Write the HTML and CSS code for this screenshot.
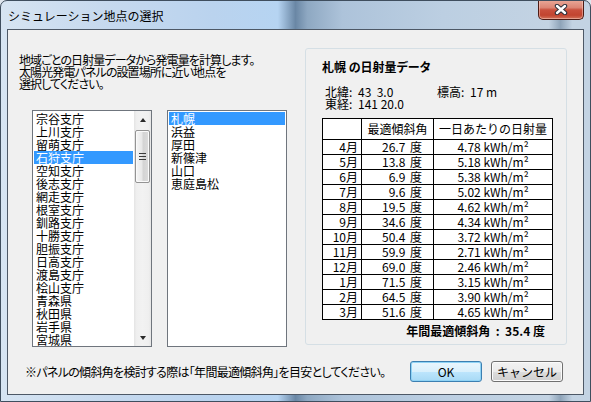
FILE: index.html
```html
<!DOCTYPE html>
<html lang="ja">
<head>
<meta charset="utf-8">
<title>シミュレーション地点の選択</title>
<link rel="stylesheet" href="styles.css">
</head>
<body>
<div class="window">
  <div class="titlebar">
    <span class="title">シミュレーション地点の選択</span>
    <button class="close" aria-label="閉じる">
      <svg width="14" height="11" viewBox="0 0 14 11">
        <path d="M3 2 L11 9 M11 2 L3 9" stroke="#2b2f3a" stroke-width="4.4" stroke-linecap="round" fill="none"/>
        <path d="M3 2 L11 9 M11 2 L3 9" stroke="#ffffff" stroke-width="2.4" stroke-linecap="round" fill="none"/>
      </svg>
    </button>
  </div>
  <div class="client">
    <div class="main">
      <div class="left">
        <p class="intro">地域ごとの日射量データから発電量を計算します。<br>太陽光発電パネルの設置場所に近い地点を<br>選択してください。</p>
        <div class="lists">
          <div class="listbox">
            <ul class="items">
              <li>宗谷支庁</li>
              <li>上川支庁</li>
              <li>留萌支庁</li>
              <li class="sel">石狩支庁</li>
              <li>空知支庁</li>
              <li>後志支庁</li>
              <li>網走支庁</li>
              <li>根室支庁</li>
              <li>釧路支庁</li>
              <li>十勝支庁</li>
              <li>胆振支庁</li>
              <li>日高支庁</li>
              <li>渡島支庁</li>
              <li>桧山支庁</li>
              <li>青森県</li>
              <li>秋田県</li>
              <li>岩手県</li>
              <li>宮城県</li>
            </ul>
            <div class="vscroll">
              <div class="sbtn"><span class="tri up"></span></div>
              <div class="track"><div class="thumb"><span class="grip"></span></div></div>
              <div class="sbtn"><span class="tri down"></span></div>
            </div>
          </div>
          <div class="listbox">
            <ul class="items">
              <li class="sel">札幌</li>
              <li>浜益</li>
              <li>厚田</li>
              <li>新篠津</li>
              <li>山口</li>
              <li>恵庭島松</li>
            </ul>
          </div>
        </div>
      </div>
      <section class="group">
        <h2 class="heading">札幌 の日射量データ</h2>
        <div class="coords">
          <span>北緯:</span><span class="val">43&nbsp;&nbsp;3.0</span><span>標高:</span><span class="val">17 m</span>
          <span>東経:</span><span class="val">141 20.0</span>
        </div>
        <table class="solar">
          <colgroup><col class="c-month"><col class="c-angle"><col class="c-rad"></colgroup>
          <thead>
            <tr><th></th><th>最適傾斜角</th><th>一日あたりの日射量</th></tr>
          </thead>
          <tbody>
            <tr><td>4月</td><td>26.7&nbsp;度</td><td>4.78 kWh/m²</td></tr>
            <tr><td>5月</td><td>13.8&nbsp;度</td><td>5.18 kWh/m²</td></tr>
            <tr><td>6月</td><td>6.9&nbsp;度</td><td>5.38 kWh/m²</td></tr>
            <tr><td>7月</td><td>9.6&nbsp;度</td><td>5.02 kWh/m²</td></tr>
            <tr><td>8月</td><td>19.5&nbsp;度</td><td>4.62 kWh/m²</td></tr>
            <tr><td>9月</td><td>34.6&nbsp;度</td><td>4.34 kWh/m²</td></tr>
            <tr><td>10月</td><td>50.4&nbsp;度</td><td>3.72 kWh/m²</td></tr>
            <tr><td>11月</td><td>59.9&nbsp;度</td><td>2.71 kWh/m²</td></tr>
            <tr><td>12月</td><td>69.0&nbsp;度</td><td>2.46 kWh/m²</td></tr>
            <tr><td>1月</td><td>71.5&nbsp;度</td><td>3.15 kWh/m²</td></tr>
            <tr><td>2月</td><td>64.5&nbsp;度</td><td>3.90 kWh/m²</td></tr>
            <tr><td>3月</td><td>51.6&nbsp;度</td><td>4.65 kWh/m²</td></tr>
          </tbody>
        </table>
        <p class="annual">年間最適傾斜角&nbsp;&nbsp;:&nbsp;&nbsp;35.4 度</p>
      </section>
    </div>
    <div class="footer">
      <p class="note">※パネルの傾斜角を検討する際は「年間最適傾斜角」を目安としてください。</p>
      <div class="buttons">
        <button class="btn default">OK</button>
        <button class="btn">キャンセル</button>
      </div>
    </div>
  </div>
</div>
</body>
</html>
```
FILE: styles.css
```css
html, body {
  margin: 0;
  padding: 0;
  background: #dfe6ee;
}

body {
  font-family: "Noto Sans CJK JP", "Noto Sans", sans-serif;
  font-size: 12px;
  color: #000;
}

.window {
  width: 591px;
  height: 402px;
  box-sizing: border-box;
  border: 1px solid #3f4e5e;
  border-radius: 7px 7px 0 0;
  overflow: hidden;
  display: flex;
  flex-direction: column;
  background: linear-gradient(90deg, #d6e4f2 0%, #c6d9ee 18%, #bad3ee 36%, #b6d4f2 47%, #6a87a5 50%, #8ea8c2 52%, #adc3da 58%, #bccfe2 75%, #c3d3e3 93%, #8fa4b9 95%, #c3d3e3 97%);
}

.titlebar {
  height: 28px;
  flex: none;
  display: flex;
  justify-content: space-between;
  align-items: flex-start;
}

.title {
  align-self: center;
  margin-top: 2px;
  padding-left: 7px;
  font-size: 12px;
  line-height: 14px;
  color: #000;
}

.close {
  margin: -1px 6px 0 0;
  width: 46px;
  height: 20px;
  padding: 0;
  border: 1px solid #4d1b14;
  border-top: none;
  border-radius: 0 0 5px 5px;
  background: linear-gradient(#eaa999 0%, #dc8574 40%, #c9503d 52%, #c24430 80%, #d2735a 100%);
  box-shadow: inset 0 0 0 1px rgba(255, 220, 210, 0.45);
  display: flex;
  align-items: center;
  justify-content: center;
}

.client {
  flex: 1;
  margin: 0 6px 6px 6px;
  border: 1px solid #4d5866;
  background: #f0f0f0;
  padding: 18px 16px 0 11px;
  display: flex;
  flex-direction: column;
}

.main {
  display: flex;
  justify-content: space-between;
  height: 299px;
}

.left {
  display: flex;
  flex-direction: column;
}

.intro {
  margin: 6px 0 0 0;
  line-height: 12px;
  font-feature-settings: "palt";
  letter-spacing: -0.9px;
}

.lists {
  display: flex;
  gap: 15px;
  margin: 20px 0 0 13px;
}

.listbox {
  width: 120px;
  height: 237px;
  box-sizing: border-box;
  border: 1px solid #6f757d;
  background: #fff;
  display: flex;
}

.items {
  flex: 1;
  margin: 0;
  padding: 1px;
  list-style: none;
  overflow: hidden;
}

.items li {
  height: 13px;
  line-height: 13px;
  padding-left: 2px;
  white-space: nowrap;
}

.items li.sel {
  background: #3399ff;
  color: #fff;
}

.vscroll {
  width: 17px;
  flex: none;
  display: flex;
  flex-direction: column;
  background: linear-gradient(90deg, #e4e4e4 0%, #efefef 15%, #f2f2f2 50%, #efefef 85%, #e6e6e6 100%);
}

.sbtn {
  height: 17px;
  flex: none;
  display: flex;
  align-items: center;
  justify-content: center;
}

.tri {
  width: 0;
  height: 0;
  border-left: 3.5px solid transparent;
  border-right: 3.5px solid transparent;
}

.tri.up {
  border-bottom: 4px solid #2a2a2a;
}

.tri.down {
  border-top: 4px solid #2a2a2a;
}

.track {
  flex: 1;
  padding-top: 2px;
}

.thumb {
  width: 15px;
  height: 53px;
  box-sizing: border-box;
  margin-left: 1px;
  border: 1px solid #939393;
  border-radius: 2px;
  background: linear-gradient(90deg, #f6f6f6 0%, #e8e8e8 45%, #d4d4d4 55%, #dcdcdc 100%);
  box-shadow: inset 0 0 0 1px #fafafa;
  display: flex;
  align-items: center;
  justify-content: center;
}

.grip {
  width: 7px;
  height: 7px;
  background: repeating-linear-gradient(#3c3c3c 0, #3c3c3c 1px, transparent 1px, transparent 3px);
}

.group {
  width: 262px;
  height: 297px;
  box-sizing: border-box;
  border: 1px solid #d5dfe5;
  border-radius: 3px;
  padding: 11px 17px 0 16px;
  display: flex;
  flex-direction: column;
}

.heading {
  margin: 0;
  font-size: 12px;
  font-weight: bold;
  line-height: 14px;
  font-feature-settings: "palt";
}

.coords {
  margin: 12px 0 0 3px;
  display: grid;
  grid-template-columns: 33px 79px 33px auto;
  line-height: 12px;
}

.solar {
  margin-top: 8px;
  width: 230px;
  border-collapse: collapse;
  table-layout: fixed;
  background: #fff;
}

.c-month { width: 39px; }
.c-angle { width: 72px; }
.c-rad { width: 119px; }

.solar th, .solar td {
  border: 1px solid #000;
  padding: 0;
  font-weight: normal;
  white-space: nowrap;
}

.solar th {
  height: 20px;
  line-height: 20px;
  text-align: center;
}

.solar td {
  height: 14px;
  line-height: 14px;
}

.solar td:nth-child(1) {
  text-align: right;
  padding-right: 3px;
}

.solar td:nth-child(2) {
  text-align: right;
  padding-right: 11px;
  word-spacing: 2px;
}

.solar td:nth-child(3) {
  text-align: center;
}

.annual {
  margin: 4px 4px 0 0;
  text-align: right;
  font-weight: bold;
  line-height: 14px;
}

.footer {
  margin-top: 14px;
  padding: 0 4px 0 6px;
  display: flex;
  justify-content: space-between;
  align-items: center;
}

.note {
  margin: 0;
  line-height: 14px;
  font-feature-settings: "palt";
  letter-spacing: -0.7px;
}

.buttons {
  display: flex;
  gap: 9px;
}

.btn {
  width: 72px;
  height: 21px;
  padding: 0;
  border: 1px solid #707070;
  border-radius: 3px;
  background: linear-gradient(#f2f2f2 0%, #ebebeb 50%, #dddddd 50%, #cfcfcf 100%);
  box-shadow: inset 0 0 0 1px #fbfbfb;
  font-family: "Noto Sans CJK JP", "Noto Sans", sans-serif;
  font-size: 12px;
  line-height: 17px;
  color: #000;
}

.btn.default {
  border-color: #3c7fb1;
  background: linear-gradient(#eaf6fd 0%, #d9f0fc 50%, #bee6fd 50%, #a7d9f5 100%);
  box-shadow: inset 0 0 0 1px #8fd3f5;
}
```
